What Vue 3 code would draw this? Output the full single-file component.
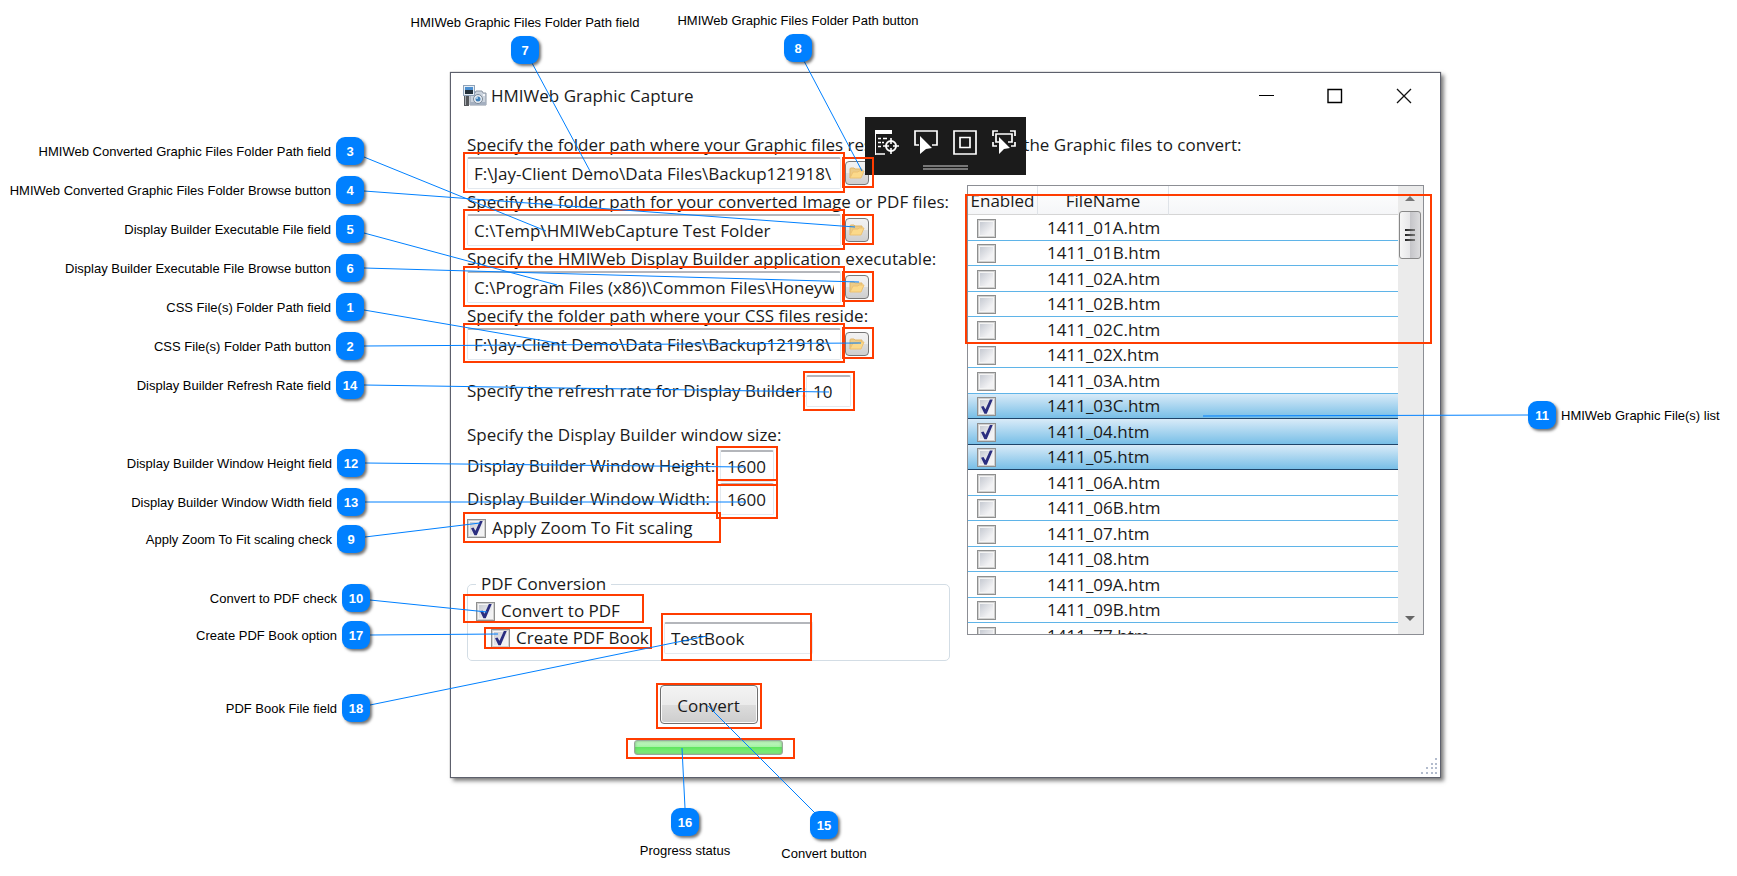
<script setup>
import { ref } from 'vue'

const paths = ref([
  { id: 'graphic', label: 'Specify the folder path where your Graphic files reside:', value: 'F:\\Jay-Client Demo\\Data Files\\Backup121918\\' },
  { id: 'converted', label: 'Specify the folder path for your converted Image or PDF files:', value: 'C:\\Temp\\HMIWebCapture Test Folder' },
  { id: 'builder', label: 'Specify the HMIWeb Display Builder application executable:', value: 'C:\\Program Files (x86)\\Common Files\\Honeywell' },
  { id: 'css', label: 'Specify the folder path where your CSS files reside:', value: 'F:\\Jay-Client Demo\\Data Files\\Backup121918\\' }
])

const refresh = ref('10')
const height = ref('1600')
const width = ref('1600')
const zoomFit = ref(true)
const toPdf = ref(true)
const makeBook = ref(true)
const book = ref('TestBook')

const names = ['01A', '01B', '02A', '02B', '02C', '02X', '03A', '03C', '04', '05', '06A', '06B', '07', '08', '09A', '09B', '77']
const files = ref(names.map((n) => ({ name: `1411_${n}.htm`, enabled: ['03C', '04', '05'].includes(n) })))

const callouts = [
  { n: 3, side: 'left', x: 350, y: 151, text: 'HMIWeb Converted Graphic Files Folder Path field', from: [364, 157], to: [546, 231] },
  { n: 4, side: 'left', x: 350, y: 190, text: 'HMIWeb Converted Graphic Files Folder Browse button', from: [364, 191], to: [855, 227] },
  { n: 5, side: 'left', x: 350, y: 229, text: 'Display Builder Executable File field', from: [364, 233], to: [557, 285] },
  { n: 6, side: 'left', x: 350, y: 268, text: 'Display Builder Executable File Browse button', from: [364, 268], to: [859, 282] },
  { n: 1, side: 'left', x: 350, y: 307, text: 'CSS File(s) Folder Path field', from: [364, 310], to: [557, 343] },
  { n: 2, side: 'left', x: 350, y: 346, text: 'CSS File(s) Folder Path button', from: [364, 346], to: [861, 343] },
  { n: 14, side: 'left', x: 350, y: 385, text: 'Display Builder Refresh Rate field', from: [364, 385], to: [829, 392] },
  { n: 12, side: 'left', x: 351, y: 463, text: 'Display Builder Window Height field', from: [365, 463], to: [745, 467] },
  { n: 13, side: 'left', x: 351, y: 502, text: 'Display Builder Window Width field', from: [365, 502], to: [746, 502] },
  { n: 9, side: 'left', x: 351, y: 539, text: 'Apply Zoom To Fit scaling check', from: [365, 537], to: [480, 523] },
  { n: 10, side: 'left', x: 356, y: 598, text: 'Convert to PDF check', from: [370, 600], to: [487, 612] },
  { n: 17, side: 'left', x: 356, y: 635, text: 'Create PDF Book option', from: [370, 635], to: [498, 634] },
  { n: 18, side: 'left', x: 356, y: 708, text: 'PDF Book File field', from: [370, 705], to: [707, 636] },
  { n: 7, side: 'top', x: 525, y: 49, text: 'HMIWeb Graphic Files Folder Path field', from: [532, 63], to: [590, 171] },
  { n: 8, side: 'top', x: 798, y: 47, text: 'HMIWeb Graphic Files Folder Path button', from: [804, 61], to: [862, 171] },
  { n: 16, side: 'bottom', x: 685, y: 822, text: 'Progress status', from: [685, 808], to: [682, 748] },
  { n: 15, side: 'bottom', x: 824, y: 825, text: 'Convert button', from: [815, 813], to: [708, 706] },
  { n: 11, side: 'right', x: 1542, y: 415, text: 'HMIWeb Graphic File(s) list', from: [1528, 415], to: [1203, 416] }
]

const frames = [
  [463, 152, 382, 41], [463, 209, 382, 41], [463, 266, 382, 41], [463, 323, 382, 40],
  [842, 157, 32, 31], [842, 214, 32, 31], [842, 271, 32, 31], [842, 327, 32, 32],
  [803, 371, 52, 40], [716, 446, 62, 40], [716, 479, 62, 40], [463, 512, 258, 31],
  [463, 594, 181, 29], [484, 627, 168, 22], [661, 613, 151, 48],
  [656, 683, 106, 46], [626, 738, 169, 21], [965, 194, 467, 150]
]

function place(c) {
  if (c.side === 'left') return { left: '0px', width: c.x + 14 + 'px', top: c.y - 14 + 'px' }
  if (c.side === 'right') return { left: c.x - 14 + 'px', top: c.y - 14 + 'px' }
  if (c.side === 'top') return { left: c.x - 150 + 'px', width: '300px', top: c.y - 36 + 'px' }
  return { left: c.x - 150 + 'px', width: '300px', top: c.y - 14 + 'px' }
}
</script>

<template>
  <main class="page">
    <section class="window" aria-label="HMIWeb Graphic Capture">
      <header class="titlebar">
        <svg class="app-icon" width="24" height="22" viewBox="0 0 24 22" aria-hidden="true">
          <rect x="1" y="9" width="5" height="12" fill="#55585c" />
          <rect x="2" y="10" width="1" height="10" fill="#a9adb2" />
          <path d="M7 8h5l1-2h6l1 2h3v12H7z" fill="#ccd4de" stroke="#8b95a3" />
          <rect x="7" y="17" width="16" height="3" fill="#a4afbf" />
          <rect x="0.500" y="0.500" width="11" height="10" fill="#e6eef6" stroke="#8ea2b8" />
          <rect x="2" y="2" width="8" height="3" fill="#4c8fd0" />
          <rect x="2" y="5" width="8" height="4" fill="#23303a" />
          <circle cx="15" cy="14" r="4.500" fill="#e8edf3" stroke="#7b8897" />
          <circle cx="15" cy="14" r="2.500" fill="#3f7fb8" />
          <circle cx="14" cy="13" r="1" fill="#b9dcf6" />
          <rect x="20" y="9" width="2" height="2" fill="#f4f7fa" />
        </svg>
        <h1>HMIWeb Graphic Capture</h1>
        <div class="controls">
          <button type="button" aria-label="Minimize"><svg width="16" height="16" viewBox="0 0 16 16"><path d="M1 7.500h15" stroke="#000" fill="none" /></svg></button>
          <button type="button" aria-label="Maximize"><svg width="16" height="16" viewBox="0 0 16 16"><path d="M1 1.500h13.500v13H1z" stroke="#000" stroke-width="1.400" fill="none" /></svg></button>
          <button type="button" aria-label="Close"><svg width="16" height="16" viewBox="0 0 16 16"><path d="M1 1l14 14M15 1L1 15" stroke="#111" stroke-width="1.300" fill="none" /></svg></button>
        </div>
      </header>

      <div class="body">
        <form class="settings" @submit.prevent>
          <div v-for="p in paths" :key="p.id" class="path">
            <label :for="p.id">{{ p.label }}</label>
            <div class="path-row">
              <input :id="p.id" v-model="p.value" class="text" type="text" />
              <button type="button" class="browse" :aria-label="'Browse: ' + p.label">
                <svg width="16" height="12" viewBox="0 0 16 12" aria-hidden="true">
                  <path d="M1 11V2q0-1 1-1h3l1 1h7v3" fill="#eccb88" stroke="#e2b768" />
                  <path d="M1 11L4 5h5l1-1h5l-3 7z" fill="#fbd98a" stroke="#edc273" />
                </svg>
              </button>
            </div>
          </div>

          <div class="line refresh">
            <label for="refresh">Specify the refresh rate for Display Builder:</label>
            <input id="refresh" v-model="refresh" class="text" type="text" />
          </div>

          <p class="size-title">Specify the Display Builder window size:</p>
          <div class="size">
            <label for="wh">Display Builder Window Height:</label>
            <input id="wh" v-model="height" class="text" type="text" />
            <label for="ww">Display Builder Window Width:</label>
            <input id="ww" v-model="width" class="text" type="text" />
          </div>
          <label class="check zoom"><input v-model="zoomFit" type="checkbox" />Apply Zoom To Fit scaling</label>

          <fieldset>
            <legend>PDF Conversion</legend>
            <label class="check"><input v-model="toPdf" type="checkbox" />Convert to PDF</label>
            <div class="book">
              <label class="check"><input v-model="makeBook" type="checkbox" />Create PDF Book</label>
              <input v-model="book" class="text" type="text" aria-label="PDF Book File" />
            </div>
          </fieldset>

          <button type="submit" class="convert">Convert</button>
          <div class="progress" role="progressbar" aria-label="Progress status" aria-valuenow="100"></div>
        </form>

        <div class="files">
          <p>Select the Graphic files to convert:</p>
          <div class="list">
            <div class="scroller">
              <table>
                <thead>
                  <tr><th class="c-on">Enabled</th><th class="c-name">FileName</th><th></th></tr>
                </thead>
                <tbody>
                  <tr v-for="f in files" :key="f.name" :class="{ on: f.enabled }">
                    <td class="c-on"><input v-model="f.enabled" type="checkbox" :aria-label="'Enable ' + f.name" /></td>
                    <td class="name" colspan="2">{{ f.name }}</td>
                  </tr>
                </tbody>
              </table>
            </div>
            <div class="scrollbar" aria-hidden="true">
              <i class="up"></i>
              <div class="thumb"><i></i><i></i><i></i></div>
              <i class="down"></i>
            </div>
          </div>
        </div>
      </div>

      <svg class="grip" width="18" height="18" viewBox="0 0 18 18" aria-hidden="true">
        <path d="M14 0h2v2h-2zM10 5h2v2h-2zM14 5h2v2h-2zM5 9h2v2H5zM10 9h2v2h-2zM14 9h2v2h-2zM0 14h2v2H0zM5 14h2v2H5zM10 14h2v2h-2zM14 14h2v2h-2z" fill="#b3bccd" />
      </svg>
    </section>

    <div class="debug-bar">
      <div class="tools">
        <button type="button" aria-label="Go to live visual tree">
          <svg width="24" height="25" viewBox="0 0 24 25">
            <path d="M0 0h17v4H0zM0 4h1v21H0z" fill="#fff" />
            <path d="M3 8.500h3M3 12.500h3M3 16.500h3M8 8.500h4M7 12.500h2M1 24h9" stroke="#fff" stroke-width="1.400" fill="none" />
            <circle cx="16" cy="16" r="5" stroke="#fff" stroke-width="2" fill="none" />
            <path d="M16 8v6M16 18v6M8 16h6M18 16h6" stroke="#fff" stroke-width="1.600" />
          </svg>
        </button>
        <button type="button" aria-label="Select element">
          <svg width="24" height="25" viewBox="0 0 24 25">
            <path d="M5 15H1V1h22v14h-5" stroke="#fff" stroke-width="1.700" fill="none" />
            <path d="M6 6l12 12-6 1-6 5z" fill="#fff" />
          </svg>
        </button>
        <button type="button" aria-label="Display layout adorners">
          <svg width="24" height="25" viewBox="0 0 24 25">
            <path d="M1 1h22v23H1z" stroke="#fff" stroke-width="1.700" fill="none" />
            <path d="M7 7.500h10v10H7z" stroke="#fff" stroke-width="1.700" fill="none" />
          </svg>
        </button>
        <button type="button" aria-label="Track focused element">
          <svg width="24" height="25" viewBox="0 0 24 25">
            <path d="M1 6V1h5M18 1h5v5M1 12v4h4M23 12v4h-4" stroke="#fff" stroke-width="1.700" fill="none" />
            <path d="M7 12H4V4h16v8h-4" stroke="#fff" stroke-width="1.700" fill="none" />
            <path d="M7 7l11 11-6 1-5 5z" fill="#fff" />
          </svg>
        </button>
      </div>
      <div class="handle"></div>
    </div>

    <svg class="overlay" width="1737" height="876" viewBox="0 0 1737 876" aria-hidden="true">
      <rect v-for="(f, i) in frames" :key="i" :x="f[0] + 1" :y="f[1] + 1" :width="f[2] - 2" :height="f[3] - 2" class="frame" />
      <line v-for="c in callouts" :key="c.n" :x1="c.from[0]" :y1="c.from[1]" :x2="c.to[0]" :y2="c.to[1]" class="lead" />
    </svg>

    <div v-for="c in callouts" :key="c.n" class="callout" :class="c.side" :style="place(c)">
      <b>{{ c.n }}</b><span>{{ c.text }}</span>
    </div>
  </main>
</template>

<style>
body {
  margin: 0;
  background: #fff;
}
</style>

<style scoped>
* {
  box-sizing: border-box;
}
.page {
  position: relative;
  min-height: 100vh;
  padding: 72px 296px 90px 450px;
  overflow: hidden;
  color: #1a1a1a;
  font-family: "Open Sans", "Noto Sans", sans-serif;
  font-size: 17px;
  line-height: 24px;
}
.window {
  position: relative;
  border: 1px solid #5d606c;
  background: #fff;
  box-shadow: 0 0 1px #777, 3px 3px 4px rgba(0, 0, 0, 0.5);
}
h1, p {
  margin: 0;
  font-size: 17px;
  font-weight: 400;
  white-space: nowrap;
}
label, legend {
  white-space: nowrap;
}
input, button {
  margin: 0;
  font: inherit;
  color: inherit;
}
.titlebar {
  display: flex;
  align-items: center;
  height: 46px;
  padding: 0 28px 0 12px;
}
.app-icon {
  margin-right: 4px;
}
.controls {
  display: flex;
  gap: 53px;
  margin-left: auto;
}
.controls button, .tools button {
  display: block;
  padding: 0;
  border: 0;
  background: none;
}
.controls svg, .tools svg {
  display: block;
}
.body {
  display: grid;
  grid-template-columns: 483px minmax(0, 1fr);
  gap: 17px;
  padding: 14px 16px 22px;
}
.path {
  margin-bottom: 1px;
}
.path label {
  display: block;
}
.path-row {
  display: flex;
  align-items: center;
  gap: 4px;
}
.path-row .text {
  width: 374px;
}
.text {
  height: 32px;
  padding: 0 6px;
  border: 1px solid #e3e9ef;
  border-top: 2px solid #b4b6bb;
  border-radius: 2px;
  background: #fff;
}
.browse {
  display: grid;
  place-items: center;
  width: 24px;
  height: 24px;
  padding: 0;
  border: 1px solid #777;
  border-radius: 4px;
  background: linear-gradient(#f2f2f2, #ebebeb 50%, #dcdcdc 50%, #cfcfcf);
}
.line {
  display: flex;
  align-items: center;
}
.refresh {
  margin-top: 15px;
}
.refresh label {
  width: 339px;
}
.refresh .text {
  width: 45px;
}
.size-title {
  margin-top: 16px;
}
.size {
  display: grid;
  grid-template-columns: 253px 54px;
  align-items: center;
  row-gap: 1px;
  margin-top: 3px;
}
.check {
  display: flex;
  align-items: center;
  gap: 6px;
}
.zoom {
  margin-top: 1px;
}
input[type="checkbox"] {
  display: grid;
  flex: none;
  place-items: center;
  width: 19px;
  height: 19px;
  appearance: none;
  border: 1px solid #8e8f8f;
  background: linear-gradient(135deg, #c6cad2, #f2f2f4 75%) center / 13px 13px no-repeat, #f4f4f4;
  box-shadow: inset 0 0 0 1px #d0d0d0;
}
input[type="checkbox"]:checked::before {
  content: "";
  width: 13px;
  height: 15px;
  background: #2b2e80;
  clip-path: polygon(8% 52%, 27% 46%, 42% 68%, 76% 4%, 98% 4%, 52% 98%, 34% 98%);
}
fieldset {
  min-width: 0;
  margin: 32px 0 0;
  padding: 3px 0 6px 8px;
  border: 1px solid #d3dde5;
  border-radius: 5px;
}
legend {
  padding: 0 5px;
}
.book {
  display: flex;
  align-items: center;
  margin: -1px 0 0 15px;
}
.book .check {
  width: 173px;
}
.book .text {
  width: 149px;
}
.convert {
  display: block;
  width: 98px;
  height: 39px;
  margin: 24px auto 0;
  padding: 2px 0 0;
  border: 1px solid #707070;
  border-radius: 4px;
  background: linear-gradient(#f3f3f3, #ebebeb 50%, #dddddd 50%, #cdcdcd);
  box-shadow: inset 0 0 0 1px #fafafa;
}
.progress {
  width: 149px;
  height: 15px;
  margin: 16px auto 0;
  border: 1px solid #9aa89a;
  border-radius: 3px;
  background: linear-gradient(#c6f8c6, #a5f2a5 45%, #62e562 50%, #86f080);
  box-shadow: inset 0 0 3px #6fae6f;
}
.files p {
  padding-left: 5px;
}
.list {
  display: flex;
  height: 450px;
  margin-top: 28px;
  border: 1px solid #8c8e94;
}
.scroller {
  flex: 1;
  min-width: 0;
  overflow: hidden;
}
table {
  width: 100%;
  table-layout: fixed;
  border-spacing: 0;
}
th {
  height: 29px;
  padding: 2px 0 0;
  border-right: 1px solid #dfe3e8;
  border-bottom: 1px solid #d5d5d5;
  background: linear-gradient(#fff, #f5f6f8);
  font-weight: 400;
}
th:last-child {
  border-right: 0;
}
.c-on {
  width: 70px;
}
.c-name {
  width: 131px;
}
td {
  height: 25px;
  padding: 0;
  border-bottom: 1px solid #5fb4e8;
  line-height: 24px;
}
tbody tr:nth-child(odd) td {
  height: 26px;
}
td.c-on {
  padding: 1px 0 0 9px;
}
td.name {
  padding-left: 9px;
}
.on {
  background: linear-gradient(#d9ebf8, #74bde6);
}
.on td {
  border-bottom-color: #1f4468;
}
.scrollbar {
  display: flex;
  flex-direction: column;
  align-items: center;
  width: 25px;
  padding-right: 1px;
  background: #ebebeb;
}
.up, .down {
  border: 5px solid transparent;
}
.up {
  margin-top: 5px;
  border-bottom-color: #777;
}
.down {
  margin: auto 0 8px;
  border-top-color: #666;
}
.thumb {
  display: flex;
  flex-direction: column;
  align-items: center;
  justify-content: center;
  gap: 3px;
  width: 22px;
  height: 48px;
  margin-top: 10px;
  border: 1px solid #888;
  border-radius: 3px;
  background: linear-gradient(90deg, #f6f6f6, #e6e6e8 50%, #c4c4c8 50%, #dcdcde);
}
.thumb i {
  width: 10px;
  height: 2px;
  background: linear-gradient(90deg, #222, #777);
}
.grip {
  position: absolute;
  right: 1px;
  bottom: 1px;
}
.debug-bar {
  position: absolute;
  top: 117px;
  left: 865px;
  width: 161px;
  height: 58px;
  padding-top: 13px;
  background: #1b1b1b;
}
.tools {
  display: flex;
  justify-content: center;
  gap: 15px;
}
.handle {
  width: 45px;
  height: 5px;
  margin: 10px auto 0;
  border: solid #777;
  border-width: 2px 0;
}
.overlay {
  position: absolute;
  top: 0;
  left: 0;
  pointer-events: none;
}
.frame {
  fill: none;
  stroke: #ff3c00;
  stroke-width: 2;
}
.lead {
  stroke: #0080ff;
  stroke-width: 1;
}
.callout {
  position: absolute;
  display: flex;
  align-items: center;
  gap: 5px;
  color: #000;
  font: 13px/16px "Liberation Sans", Arial, sans-serif;
  white-space: nowrap;
}
.callout span {
  padding-top: 2px;
}
.callout b {
  display: grid;
  place-items: center;
  width: 28px;
  height: 28px;
  padding-top: 1px;
  border-radius: 9px;
  background: #0080ff;
  box-shadow: 2px 2px 3px rgba(0, 0, 0, 0.55);
  color: #fff;
}
.left {
  flex-direction: row-reverse;
}
.top {
  flex-direction: column-reverse;
}
.bottom {
  flex-direction: column;
}
</style>
